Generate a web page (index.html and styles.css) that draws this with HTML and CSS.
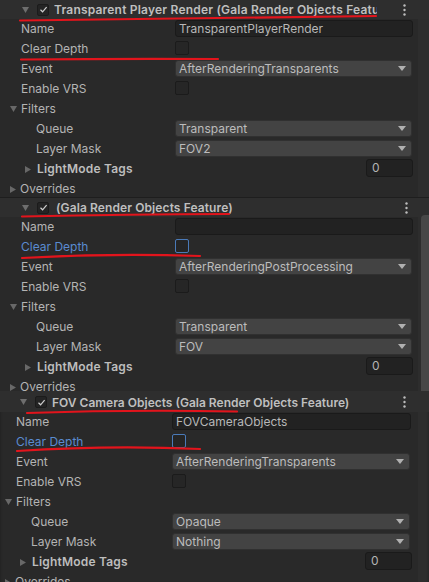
FILE: index.html
```html
<!DOCTYPE html>
<html>
<head>
<meta charset="utf-8">
<link rel="stylesheet" href="styles.css">
</head>
<body>
<div class="page">

  <section class="panel p1">
    <div class="hdr">
      <svg class="hfold" width="7" height="6" viewBox="0 0 7 6"><path d="M0 0H7L3.5 6Z"/></svg>
      <span class="hcheck"><svg width="9" height="9" viewBox="0 0 9 9"><path d="M1.5 4.8L3.6 6.8L7.6 2.2"/></svg></span>
      <span class="title">Transparent Player Render (Gala Render Objects Feature)</span>
      <svg class="kebab" width="3" height="12" viewBox="0 0 3 12"><circle cx="1.5" cy="1.5" r="1.2"/><circle cx="1.5" cy="6" r="1.2"/><circle cx="1.5" cy="10.5" r="1.2"/></svg>
    </div>
    <div class="row"><span class="lbl">Name</span><div class="tfield">TransparentPlayerRender</div></div>
    <div class="row"><span class="lbl">Clear Depth</span><span class="cbox"></span></div>
    <div class="row"><span class="lbl">Event</span><div class="drop">AfterRenderingTransparents<svg class="darr" width="8" height="5" viewBox="0 0 8 5"><path d="M0 0H8L4 5Z"/></svg></div></div>
    <div class="row"><span class="lbl">Enable VRS</span><span class="cbox"></span></div>
    <div class="row"><span class="lbl fold-lbl"><svg class="fold" width="7" height="6" viewBox="0 0 7 6"><path d="M0 0H7L3.5 6Z"/></svg>Filters</span></div>
    <div class="row"><span class="lbl sub">Queue</span><div class="drop">Transparent<svg class="darr" width="8" height="5" viewBox="0 0 8 5"><path d="M0 0H8L4 5Z"/></svg></div></div>
    <div class="row"><span class="lbl sub">Layer Mask</span><div class="drop">FOV2<svg class="darr" width="8" height="5" viewBox="0 0 8 5"><path d="M0 0H8L4 5Z"/></svg></div></div>
    <div class="row"><span class="lbl sub2 bold"><svg class="fold" width="6" height="7" viewBox="0 0 6 7"><path d="M0 0V7L6 3.5Z"/></svg>LightMode Tags</span><div class="ifield">0</div></div>
    <div class="row last"><span class="lbl fold-lbl"><svg class="fold" width="6" height="7" viewBox="0 0 6 7"><path d="M0 0V7L6 3.5Z"/></svg>Overrides</span></div>
  </section>

  <section class="panel p2">
    <div class="hdr">
      <svg class="hfold" width="7" height="6" viewBox="0 0 7 6"><path d="M0 0H7L3.5 6Z"/></svg>
      <span class="hcheck"><svg width="9" height="9" viewBox="0 0 9 9"><path d="M1.5 4.8L3.6 6.8L7.6 2.2"/></svg></span>
      <span class="title">(Gala Render Objects Feature)</span>
      <svg class="kebab" width="3" height="12" viewBox="0 0 3 12"><circle cx="1.5" cy="1.5" r="1.2"/><circle cx="1.5" cy="6" r="1.2"/><circle cx="1.5" cy="10.5" r="1.2"/></svg>
    </div>
    <div class="row"><span class="lbl">Name</span><div class="tfield"></div></div>
    <div class="row"><span class="lbl blue">Clear Depth</span><span class="cbox focus"></span></div>
    <div class="row"><span class="lbl">Event</span><div class="drop">AfterRenderingPostProcessing<svg class="darr" width="8" height="5" viewBox="0 0 8 5"><path d="M0 0H8L4 5Z"/></svg></div></div>
    <div class="row"><span class="lbl">Enable VRS</span><span class="cbox"></span></div>
    <div class="row"><span class="lbl fold-lbl"><svg class="fold" width="7" height="6" viewBox="0 0 7 6"><path d="M0 0H7L3.5 6Z"/></svg>Filters</span></div>
    <div class="row"><span class="lbl sub">Queue</span><div class="drop">Transparent<svg class="darr" width="8" height="5" viewBox="0 0 8 5"><path d="M0 0H8L4 5Z"/></svg></div></div>
    <div class="row"><span class="lbl sub">Layer Mask</span><div class="drop">FOV<svg class="darr" width="8" height="5" viewBox="0 0 8 5"><path d="M0 0H8L4 5Z"/></svg></div></div>
    <div class="row"><span class="lbl sub2 bold"><svg class="fold" width="6" height="7" viewBox="0 0 6 7"><path d="M0 0V7L6 3.5Z"/></svg>LightMode Tags</span><div class="ifield">0</div></div>
    <div class="row"><span class="lbl fold-lbl"><svg class="fold" width="6" height="7" viewBox="0 0 6 7"><path d="M0 0V7L6 3.5Z"/></svg>Overrides</span></div>
    <div class="thumb"></div>
  </section>

  <section class="panel p3">
    <div class="hdr">
      <svg class="hfold" width="7" height="6" viewBox="0 0 7 6"><path d="M0 0H7L3.5 6Z"/></svg>
      <span class="hcheck"><svg width="9" height="9" viewBox="0 0 9 9"><path d="M1.5 4.8L3.6 6.8L7.6 2.2"/></svg></span>
      <span class="title">FOV Camera Objects (Gala Render Objects Feature)</span>
      <svg class="kebab" width="3" height="12" viewBox="0 0 3 12"><circle cx="1.5" cy="1.5" r="1.2"/><circle cx="1.5" cy="6" r="1.2"/><circle cx="1.5" cy="10.5" r="1.2"/></svg>
    </div>
    <div class="row"><span class="lbl">Name</span><div class="tfield">FOVCameraObjects</div></div>
    <div class="row"><span class="lbl blue">Clear Depth</span><span class="cbox focus"></span></div>
    <div class="row"><span class="lbl">Event</span><div class="drop">AfterRenderingTransparents<svg class="darr" width="8" height="5" viewBox="0 0 8 5"><path d="M0 0H8L4 5Z"/></svg></div></div>
    <div class="row"><span class="lbl">Enable VRS</span><span class="cbox"></span></div>
    <div class="row"><span class="lbl fold-lbl"><svg class="fold" width="7" height="6" viewBox="0 0 7 6"><path d="M0 0H7L3.5 6Z"/></svg>Filters</span></div>
    <div class="row"><span class="lbl sub">Queue</span><div class="drop">Opaque<svg class="darr" width="8" height="5" viewBox="0 0 8 5"><path d="M0 0H8L4 5Z"/></svg></div></div>
    <div class="row"><span class="lbl sub">Layer Mask</span><div class="drop">Nothing<svg class="darr" width="8" height="5" viewBox="0 0 8 5"><path d="M0 0H8L4 5Z"/></svg></div></div>
    <div class="row"><span class="lbl sub2 bold"><svg class="fold" width="6" height="7" viewBox="0 0 6 7"><path d="M0 0V7L6 3.5Z"/></svg>LightMode Tags</span><div class="ifield">0</div></div>
    <div class="row"><span class="lbl fold-lbl"><svg class="fold" width="6" height="7" viewBox="0 0 6 7"><path d="M0 0V7L6 3.5Z"/></svg>Overrides</span></div>
  </section>

  <svg class="marks" width="429" height="582" viewBox="0 0 429 582">
    <path d="M20 20.5 Q 200 17.5 376 16"/>
    <path d="M21 59.5 Q 120 58.5 218 59"/>
    <path d="M22 216.5 Q 130 214 229 214"/>
    <path d="M22 258 Q 110 253 200 256"/>
    <path d="M27 413 Q 130 409.5 237 411.5"/>
    <path d="M17 451 Q 110 445 200 449"/>
  </svg>
</div>
</body>
</html>
```

FILE: styles.css
```css
* { box-sizing: border-box; }
html, body {
  margin: 0;
  padding: 0;
  background: #292929;
}
body {
  font-family: Inter, "Noto Sans", sans-serif;
  font-size: 12px;
  color: #b4b4b4;
}
.page {
  position: relative;
  width: 429px;
  height: 582px;
  overflow: hidden;
  display: flex;
  flex-direction: column;
}
.panel {
  --ind: 21px;
  --col: 175px;
  --fw: 238px;
  --ifx: 366px;
  position: relative;
  overflow: hidden;
  flex: none;
  background: #292929;
  background-image: linear-gradient(to right, transparent 418px, #2d2d2d 418px);
}
.p1 { height: 198px; border-bottom: 1px solid #1e1e1e; }
.p2 { height: 193px; }
.p3 {
  height: 191px;
  --ind: 16px;
  --col: 172px;
  --fw: 239px;
  --ifx: 365px;
  box-shadow: inset 0 2px 3px rgba(0,0,0,0.35);
}
.hdr {
  display: flex;
  align-items: center;
  height: 19px;
  padding-left: 22px;
  background: #2e2e2e;
}
.p3 .hdr { height: 21px; padding-left: 20px; padding-top: 1px; }
.hfold { fill: #6e6e6e; flex: none; }
.hcheck {
  flex: none;
  width: 12px;
  height: 12px;
  margin-left: 8px;
  border: 1px solid #1b1b1b;
  border-radius: 2px;
  background: #242424;
  display: flex;
  align-items: center;
  justify-content: center;
}
.hcheck path { fill: none; stroke: #cfcfcf; stroke-width: 1.2; }
.title {
  flex: none;
  width: 323px;
  margin-left: 5px;
  font-weight: 600;
  color: #bfbfbf;
  white-space: nowrap;
  overflow: hidden;
  letter-spacing: 0.2px;
}
.p2 .title { margin-left: 7px; letter-spacing: 0.1px; }
.p3 .title { margin-left: 5px; width: 330px; letter-spacing: 0; }
.kebab { fill: #bdbdbd; flex: none; margin-left: 26px; }
.p3 .kebab { margin-left: 21px; }

.row {
  display: flex;
  align-items: flex-start;
  height: 20px;
}
.lbl {
  flex: none;
  width: var(--col);
  padding-left: var(--ind);
  line-height: 20px;
  white-space: nowrap;
  display: flex;
  align-items: center;
}
.lbl.sub { padding-left: calc(var(--ind) + 15px); }
.lbl.sub2 { padding-left: calc(var(--ind) + 4px); }
.lbl.bold { font-weight: 600; color: #bdbdbd; letter-spacing: 0.2px; }
.lbl.blue { color: #5a8bd0; }
.fold-lbl { padding-left: calc(var(--ind) - 11px); }
.fold { fill: #686868; flex: none; margin-right: 4px; }
.sub2 .fold { margin-right: 6px; }

.tfield {
  flex: none;
  width: var(--fw);
  height: 17px;
  margin-top: 1px;
  background: #222222;
  border: 1px solid #1a1a1a;
  border-radius: 3px;
  padding-left: 3px;
  line-height: 15px;
  color: #b8b8b8;
}
.drop {
  position: relative;
  flex: none;
  width: calc(var(--fw) - 1px);
  height: 17px;
  margin-top: 1px;
  background: #434343;
  border: 1px solid #303030;
  border-radius: 3px;
  padding-left: 3px;
  line-height: 15px;
  color: #bcbcbc;
}
.darr { position: absolute; right: 5px; top: 5px; fill: #b0b0b0; }
.cbox {
  flex: none;
  width: 14px;
  height: 14px;
  margin-top: 2px;
  background: #262626;
  border: 1px solid #1b1b1b;
  border-radius: 2px;
}
.cbox.focus { border-color: #4a7ab8; background: #252525; }
.ifield {
  flex: none;
  width: 47px;
  height: 18px;
  margin-left: calc(var(--ifx) - var(--col));
  background: #222222;
  border: 1px solid #1a1a1a;
  border-radius: 3px;
  padding-left: 5px;
  line-height: 16px;
  color: #b4b4b4;
}
.thumb {
  position: absolute;
  right: 0;
  top: 17px;
  width: 8px;
  height: 180px;
  border-radius: 4px 0 0 0;
  background: #474747;
}
.marks {
  position: absolute;
  left: 0;
  top: 0;
  pointer-events: none;
}
.marks path { fill: none; stroke: #e2141c; stroke-width: 2.2; stroke-linecap: round; }
```
